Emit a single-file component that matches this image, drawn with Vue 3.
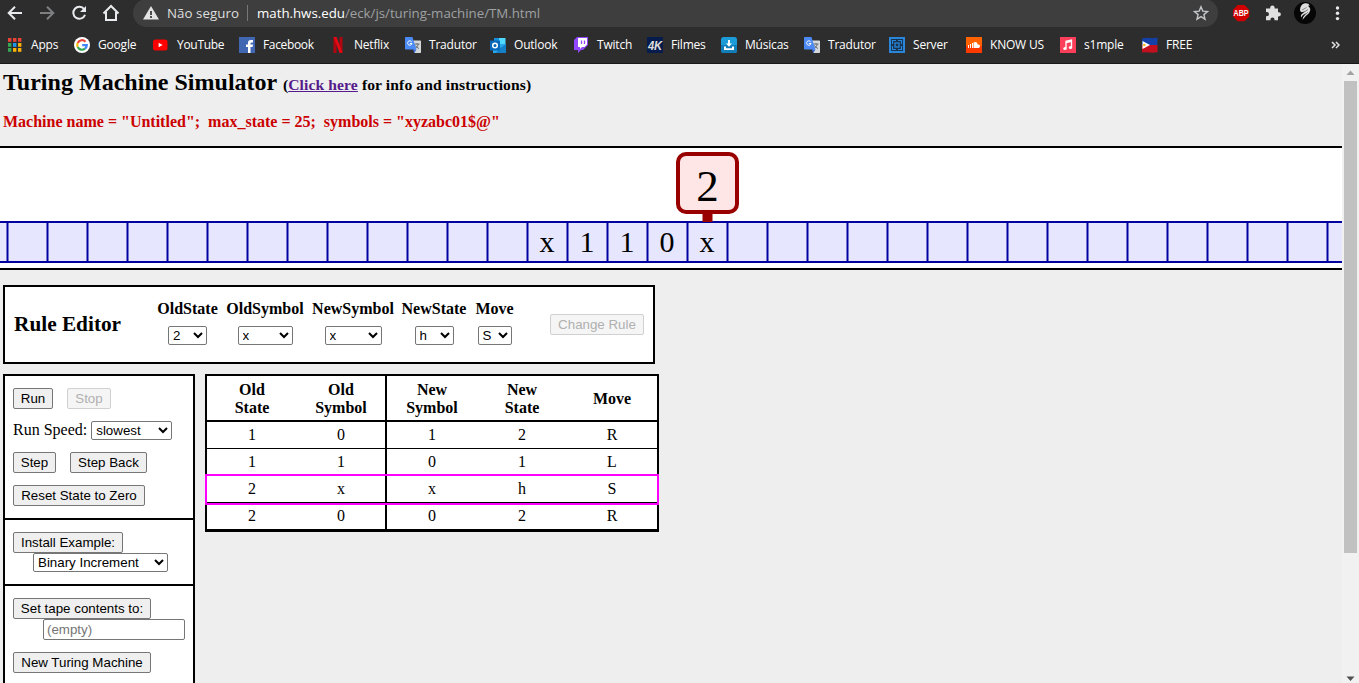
<script setup>
const bookmarks = [
  { id: 'apps', label: 'Apps' },
  { id: 'google', label: 'Google' },
  { id: 'youtube', label: 'YouTube' },
  { id: 'facebook', label: 'Facebook' },
  { id: 'netflix', label: 'Netflix' },
  { id: 'translate', label: 'Tradutor' },
  { id: 'outlook', label: 'Outlook' },
  { id: 'twitch', label: 'Twitch' },
  { id: 'fourk', label: 'Filmes' },
  { id: 'download', label: 'Músicas' },
  { id: 'translate', label: 'Tradutor' },
  { id: 'server', label: 'Server' },
  { id: 'soundcloud', label: 'KNOW US' },
  { id: 'music', label: 's1mple' },
  { id: 'flag', label: 'FREE' },
]
const appDots = ['#ea4335', '#ea4335', '#ea4335', '#34a853', '#2196f3', '#fbb105', '#34a853', '#fbb105', '#fbb105']
const cellLines = Array.from({ length: 34 }, (_, i) => 7.5 + i * 40)
const tape = [
  { x: 547, s: 'x' },
  { x: 587, s: '1' },
  { x: 627, s: '1' },
  { x: 667, s: '0' },
  { x: 707, s: 'x' },
]
const fields = [
  { label: 'OldState', value: '2', cls: 'f1' },
  { label: 'OldSymbol', value: 'x', cls: 'f2' },
  { label: 'NewSymbol', value: 'x', cls: 'f3' },
  { label: 'NewState', value: 'h', cls: 'f4' },
  { label: 'Move', value: 'S', cls: 'f5' },
]
const heads = [['Old', 'State'], ['Old', 'Symbol'], ['New', 'Symbol'], ['New', 'State'], ['Move']]
const rules = [
  ['1', '0', '1', '2', 'R'],
  ['1', '1', '0', '1', 'L'],
  ['2', 'x', 'x', 'h', 'S'],
  ['2', '0', '0', '2', 'R'],
]
</script>

<template>
  <div class="window">
    <header class="chrome">
      <div class="toolbar">
        <svg class="nav" width="133" height="27" viewBox="0 0 133 27" fill="none" stroke-width="2">
          <path d="M22 13H9.500M15 6.700L8.700 13l6.300 6.300" stroke="#e8eaed" />
          <path d="M40 13h12.500M47 6.700L53.300 13 47 19.300" stroke="#7d7f81" />
          <path d="M84.200 9.300A6 6 0 1 0 85 14.700" stroke="#e8eaed" />
          <path d="M86 6v6h-6z" fill="#e8eaed" />
          <path d="M103.500 13.500L111 6l7.500 7.500M106 12v8h10v-8" stroke="#e8eaed" />
        </svg>
        <div class="omnibox">
          <svg class="warn" width="16" height="14" viewBox="0 0 16 14">
            <path d="M8 0l8 13.500H0z" fill="#e3e3e3" />
            <path d="M7.100 5h1.800v4H7.100zM7.100 10h1.800v2H7.100z" fill="#3c3c3c" />
          </svg>
          <span class="secure">Não seguro</span>
          <span class="sep"></span>
          <span class="url"><b>math.hws.edu</b>/eck/js/turing-machine/TM.html</span>
          <svg class="star" width="16" height="16" viewBox="0 0 16 16">
            <path d="M8 1.800l1.800 4.300 4.700.4-3.600 3.100 1.100 4.600L8 11.700l-4 2.500 1.100-4.600L1.500 6.500l4.700-.4z" fill="none" stroke="#c4c6c8" stroke-width="1.400" />
          </svg>
        </div>
        <svg class="tools" width="141" height="27" viewBox="0 0 141 27">
          <path d="M19.700 5h6.800l4.700 4.700v6.800l-4.700 4.700h-6.800L15 16.500V9.700z" fill="#d00000" />
          <text x="23.100" y="16" class="abp" textLength="15" lengthAdjust="spacingAndGlyphs">ABP</text>
          <path d="M49 8.500h3.200V7.600a2.200 2.200 0 0 1 4.400 0v.9H60v3.700h.8a2 2 0 0 1 0 4.200H60v3.900h-3.500v-.8a2 2 0 0 0-4 0v.8H48v-4h.8a2.200 2.200 0 0 0 0-4.400H48V8.500z" fill="#e1e1e1" />
          <circle cx="87" cy="13" r="11" fill="#060606" />
          <path d="M82 10q.2-5.500 5-6.700 4-.3 4.700 2.200l-1.800.3q3.700 2.700 1.700 6.200-1 2-3.600 3.700l-3.500 4q.2-2.500 1.800-4.400l2-2.300-3.300 2-2 2.500q-.5-1.800.6-3.300l3.400-3-3.200 1q-1.600-.4-1.800-2.200z" fill="#dedede" />
          <path d="M84 10l4.500-2.500M84 13.500l6-4M85 17l5-5" stroke="#333" stroke-width=".5" />
          <circle cx="119.500" cy="8" r="1.700" fill="#e8eaed" />
          <circle cx="119.500" cy="13.300" r="1.700" fill="#e8eaed" />
          <circle cx="119.500" cy="18.600" r="1.700" fill="#e8eaed" />
        </svg>
      </div>
      <nav class="bookmarks">
        <div v-for="(b, i) in bookmarks" :key="i" class="bookmark" :class="b.id">
          <svg width="16" height="16" viewBox="0 0 16 16">
            <template v-if="b.id === 'apps'">
              <rect v-for="(c, k) in appDots" :key="k" :x="1 + (k % 3) * 5" :y="1 + Math.floor(k / 3) * 5" width="3.400" height="3.800" :fill="c" />
            </template>
            <template v-else-if="b.id === 'google'">
              <circle cx="8" cy="8" r="8" fill="#fff" />
              <g fill="none" stroke-width="2.200">
                <path d="M11.500 4.700A4.800 4.800 0 0 0 3.700 5.900" stroke="#ea4335" />
                <path d="M3.700 5.900a4.800 4.800 0 0 0 0 4.200" stroke="#fbbc05" />
                <path d="M3.700 10.100a4.800 4.800 0 0 0 7.300 1.600" stroke="#34a853" />
                <path d="M11 11.700A4.800 4.800 0 0 0 12.800 8.100H8.200" stroke="#4285f4" />
              </g>
            </template>
            <template v-else-if="b.id === 'youtube'">
              <rect x="0" y="2.500" width="14.500" height="11" rx="2.500" fill="#f00" />
              <path d="M5.600 5.700v4.600L9.600 8z" fill="#fff" />
            </template>
            <template v-else-if="b.id === 'facebook'">
              <rect width="16" height="16" fill="#4267b2" />
              <path d="M9 16V10H7V7.500h2V5.800Q9 3 11.800 3H14v2.400h-1.300q-1.200 0-1.200 1.100v1H14l-.4 2.500h-2.100v6z" fill="#fff" />
            </template>
            <template v-else-if="b.id === 'netflix'">
              <path d="M3.500 0H6.500V16l-3 .2zM9.500 0h3v16l-3-.3z" fill="#b1060f" />
              <path d="M3.500 0h3l6 16-3-.3z" fill="#e50914" />
            </template>
            <template v-else-if="b.id === 'translate'">
              <path d="M7 3.500h8.300q.7 0 .7.700V15.300q0 .7-.7.700H9.500z" fill="#d6d9dc" />
              <path d="M9.300 7h5.200M12 6v1.500M13.500 7q-.6 3-4 4.700M10.500 8.500q1 2 3.500 3" stroke="#687076" fill="none" />
              <path d="M.7 0H7.400L11.500 12.500H.7Q0 12.500 0 11.800V.7Q0 0 .7 0z" fill="#4c8bf5" />
              <path d="M7.800 12.500h3.700L9.300 16z" fill="#3367d6" />
              <path d="M6.600 4.700A2.200 2.200 0 1 0 7 6.500H4.900" stroke="#fff" fill="none" />
            </template>
            <template v-else-if="b.id === 'outlook'">
              <path d="M4 1h6v6H4z" fill="#1490df" /><path d="M9 1h6.500v6H9z" fill="#50d9ff" />
              <path d="M3 7h13v9H3z" fill="#28a8ea" /><path d="M9 12l7-5v9H6z" fill="#1480c8" />
              <rect y="3.500" width="10" height="10" fill="#0668ba" />
              <circle cx="5" cy="8.500" r="2.300" fill="none" stroke="#fff" stroke-width="1.500" />
            </template>
            <template v-else-if="b.id === 'twitch'">
              <path d="M1 3L4 0h11v8l-5 5H8l-3 3v-3H1z" fill="#9146ff" />
              <path d="M5 1h9v6.500L11.500 10H9l-2 2v-2H5z" fill="#fff" />
              <path d="M8.500 3.500v3.500M11.500 3.500v3.500" stroke="#9146ff" stroke-width="1.300" />
            </template>
            <template v-else-if="b.id === 'fourk'">
              <rect width="16" height="16" fill="#061c4c" />
              <text x="8" y="12.500" class="fk" textLength="14" lengthAdjust="spacingAndGlyphs">4K</text>
            </template>
            <template v-else-if="b.id === 'download'">
              <rect width="16" height="16" rx="2.500" fill="#1b9bd8" />
              <path d="M0 8h16v5.500q0 2.500-2.500 2.500h-11Q0 16 0 13.500z" fill="#117db9" />
              <path d="M7 3h2v3.500h2L8 9.800 5 6.500h2zM3 9.500h2v1.700h6V9.500h2V13H3z" fill="#fff" />
            </template>
            <template v-else-if="b.id === 'server'">
              <rect width="16" height="16" fill="#2a86d8" />
              <rect x="2" y="2" width="12" height="12" fill="#17334f" />
              <path d="M7 3.500H3.500V7M9 3.500h3.500V7M7 12.500H3.500V9M9 12.500h3.500V9" stroke="#2a86d8" stroke-width="1.200" fill="none" />
              <rect x="6" y="6" width="4" height="4" fill="none" stroke="#2a86d8" stroke-width="1.300" />
            </template>
            <template v-else-if="b.id === 'soundcloud'">
              <rect width="16" height="16" fill="#ff6200" />
              <rect y="9" width="16" height="7" fill="#ff3a00" />
              <path d="M7.500 5.500q3.500-1.500 4.200 2 2.300-.3 2.300 1.700T12 11H7.500z" fill="#fff" />
              <path d="M2.500 8v3M4.500 7v4M6.500 6v5" stroke="#fff" />
            </template>
            <template v-else-if="b.id === 'music'">
              <rect width="16" height="16" fill="#fb3f5b" />
              <path d="M6 11.200V4.300l5.500-1.200v7" stroke="#fff" stroke-width="1.300" fill="none" />
              <path d="M6 5.500l5.500-1.200" stroke="#fff" stroke-width="1.500" />
              <ellipse cx="5" cy="11.500" rx="1.700" ry="1.500" fill="#fff" /><ellipse cx="10.500" cy="10.400" rx="1.700" ry="1.500" fill="#fff" />
            </template>
            <template v-else>
              <path d="M0 1.500q4-1 8-.5t7.500-.5V8H0z" fill="#1440a8" />
              <path d="M0 8h15.500v7q-4 1-8 .5t-7.500 0z" fill="#c4101e" />
              <path d="M.5 4L8 8l-7.500 4z" fill="#fff" /><circle cx="2.300" cy="8" r="1.300" fill="#f5b921" />
            </template>
          </svg>
          <span>{{ b.label }}</span>
        </div>
        <svg class="more" width="9" height="8" viewBox="0 0 9 8"><path d="M1 1l3 3-3 3M5 1l3 3-3 3" fill="none" stroke="#e0e0e0" stroke-width="1.500" /></svg>
      </nav>
    </header>

    <div class="viewport">
      <main class="page">
        <h2>Turing Machine Simulator <span class="info">(<a>Click here</a> for info and instructions)</span></h2>
        <p class="machine">Machine name = "Untitled";&nbsp; max_state = 25;&nbsp; symbols = "xyzabc01$@"</p>

        <svg class="tape" width="1342" height="124" viewBox="0 146 1342 124">
          <rect y="146" width="1342" height="124" fill="#000" />
          <rect y="148" width="1342" height="120" fill="#fff" />
          <rect y="222" width="1342" height="40" fill="#e6e6ff" />
          <path v-for="x in cellLines" :key="x" :d="`M${x} 222v40`" stroke="#0000a0" stroke-width="2" />
          <path d="M0 222h1342M0 262h1342" stroke="#0000a0" stroke-width="2" />
          <rect x="702.500" y="212" width="10" height="10" fill="#900" />
          <rect x="678" y="154" width="59" height="58" rx="8" fill="#ffe6e6" stroke="#900" stroke-width="4" />
          <text x="707.500" y="201" class="state">2</text>
          <text v-for="c in tape" :key="c.x" :x="c.x" y="252" class="sym">{{ c.s }}</text>
        </svg>

        <section class="editor">
          <h3>Rule Editor</h3>
          <div v-for="f in fields" :key="f.cls" class="field" :class="f.cls">
            <label>{{ f.label }}</label>
            <select><option>{{ f.value }}</option></select>
          </div>
          <button class="change" disabled>Change Rule</button>
        </section>

        <div class="lower">
          <aside class="controls">
            <div class="group run">
              <div class="line"><button class="w40">Run</button><button class="w44" disabled>Stop</button></div>
              <div class="line speed"><span>Run Speed:</span><select><option>slowest</option></select></div>
              <div class="line"><button class="w43">Step</button><button class="w77">Step Back</button></div>
              <div class="line"><button class="w132">Reset State to Zero</button></div>
            </div>
            <div class="group install">
              <button class="w110">Install Example:</button>
              <select><option>Binary Increment</option></select>
            </div>
            <div class="group set">
              <button class="w138">Set tape contents to:</button>
              <input type="text" placeholder="(empty)" />
              <button class="w138 fresh">New Turing Machine</button>
            </div>
          </aside>

          <div class="rules">
            <div class="row head">
              <div v-for="(h, i) in heads" :key="i" class="cell"><span v-for="w in h" :key="w">{{ w }}</span></div>
            </div>
            <div v-for="(r, i) in rules" :key="i" class="row" :class="{ current: i === 2 }">
              <div v-for="(v, j) in r" :key="j" class="cell">{{ v }}</div>
            </div>
          </div>
        </div>
      </main>
      <div class="scrollbar">
        <svg width="17" height="17"><path d="M4.500 11l4-4.500 4 4.500z" fill="#a3a3a3" /></svg>
        <div class="thumb"></div>
        <svg class="down" width="17" height="13"><path d="M4.500 6.500h8l-4 4.500z" fill="#505050" /></svg>
      </div>
    </div>
  </div>
</template>

<style>
html, body { margin: 0; overflow: hidden; }
</style>

<style scoped>
* { box-sizing: border-box; }
.window { width: 1359px; height: 683px; overflow: hidden; display: flex; flex-direction: column; background: #eee; font-family: "Liberation Serif", "Times New Roman", serif; font-size: 16px; line-height: 18px; color: #000; }
.chrome { height: 64px; flex: none; background: #2d2d2d; border-bottom: 1px solid #191919; font-family: "Open Sans", "Noto Sans", sans-serif; }
.toolbar { display: flex; height: 27px; }
.nav, .tools { flex: none; display: block; }
.omnibox { width: 1085px; height: 28px; margin-top: -1px; background: #3e3e3e; border-radius: 14px; display: flex; align-items: center; font-size: 13.300px; color: #dedede; white-space: nowrap; }
.warn { margin-left: 10px; }
.secure { margin-left: 8px; width: 73px; letter-spacing: 0.050px; }
.sep { width: 1px; height: 16px; background: #777; margin: 0 9px 0 7px; }
.url { color: #9fa1a3; letter-spacing: -0.020px; }
.url b { font-weight: 400; color: #fff; }
.star { margin-left: auto; margin-right: 9px; }
.abp { font: 700 9px "Liberation Sans", sans-serif; fill: #fff; text-anchor: middle; }
.fk { font: italic 700 12px "Liberation Sans", sans-serif; fill: #ddd; text-anchor: middle; }
.bookmarks { height: 36px; padding-left: 7px; display: grid; grid-template-columns: 67px 79px 86px 91px 75px 85px 83px 74px 74px 83px 85px 77px 94px 82px 189px 20px; align-items: center; font-size: 12px; color: #fff; }
.bookmark { display: flex; align-items: center; gap: 8px; white-space: nowrap; letter-spacing: -0.200px; }
.facebook { letter-spacing: -0.350px; }
.youtube { letter-spacing: -0.300px; }
.bookmark svg { flex: none; }
.viewport { flex: 1; display: flex; min-height: 0; }
.page { width: 1342px; overflow: hidden; }
h2 { margin: 4px 0 0 3px; font-size: 24px; line-height: 28px; height: 28px; white-space: nowrap; letter-spacing: 0.020px; }
.info { font-size: 15.600px; letter-spacing: 0.110px; }
a { color: #551a8b; text-decoration: underline; }
.machine { margin: 17px 0 0 3px; height: 33px; font-weight: 700; color: #c00; white-space: nowrap; }
.tape { display: block; }
.state { font: 45px "Liberation Serif", serif; text-anchor: middle; }
.sym { font: 30px "Liberation Serif", serif; text-anchor: middle; }
.editor { margin: 15px 0 0 3px; width: 652px; height: 79px; border: 2px solid #000; background: #fff; display: flex; align-items: center; }
h3 { margin: -2px 0 0 9px; width: 144px; font-size: 21.300px; line-height: 24px; white-space: nowrap; }
.field { display: flex; flex-direction: column; align-items: center; gap: 8px; font-weight: 700; margin-top: -5px; }
.f1 { width: 59px; }
.f2 { width: 96px; }
.f3 { width: 80px; }
.f4 { width: 82px; }
.f5 { width: 39px; }
select { font: 13.333px "Liberation Sans", Arial, sans-serif; height: 19px; margin: 0; padding: 0; border: 1px solid #767676; border-radius: 2px; background: #fff; color: #000; }
.f1 select, .f4 select { width: 39px; }
.f2 select { width: 55px; }
.f3 select { width: 57px; }
.f5 select { width: 34px; }
button { font: 13.333px "Liberation Sans", Arial, sans-serif; height: 21px; margin: 0; padding: 0; border: 1px solid #767676; border-radius: 2px; background: #efefef; color: #000; white-space: nowrap; }
button:disabled { color: #b0b0b0; border-color: #d0d0d0; background: #f5f5f5; }
.change { width: 94px; margin-left: 36px; }
.lower { display: flex; align-items: flex-start; margin: 10px 0 0 3px; gap: 10px; }
.controls { width: 192px; border: 2px solid #000; background: #fff; }
.group { padding-left: 8px; display: flex; flex-direction: column; align-items: flex-start; }
.group + .group { border-top: 2px solid #000; }
.run { height: 142px; padding-top: 12px; }
.line { display: flex; gap: 14px; margin-bottom: 12px; }
.speed { gap: 4px; height: 19px; }
.speed select { width: 81px; }
.install { height: 66px; padding-top: 12px; }
.install select { width: 135px; margin-left: 20px; }
.set { height: 120px; padding-top: 12px; }
input { font: 13.333px "Liberation Sans", Arial, sans-serif; width: 142px; height: 21px; margin: 0 0 0 30px; padding: 1px 3px; border: 1px solid #767676; border-radius: 2px; background: #fff; }
input::placeholder { color: #757575; }
.fresh { margin-top: 12px; }
.w40 { width: 40px; } .w44 { width: 44px; } .w43 { width: 43px; } .w77 { width: 77px; }
.w132 { width: 132px; } .w110 { width: 110px; } .w138 { width: 138px; }
.rules { width: 454px; border: 2px solid #000; border-bottom-width: 3px; background: #fff; }
.row { position: relative; height: 27px; display: grid; grid-template-columns: 90px 90px 90px 90px 90px; border-bottom: 1px solid #000; }
.row:last-child { height: 26px; border-bottom: 0; }
.head { height: 46px; border-bottom-width: 2px; font-weight: 700; }
.cell { display: flex; flex-direction: column; align-items: center; justify-content: center; }
.head .cell { padding-top: 1px; }
.cell:nth-child(2) { border-right: 2px solid #000; }
.current::after { content: ""; position: absolute; z-index: 1; top: -2px; bottom: -3px; left: -2px; right: -2px; border: 2px solid #f0f; }
.scrollbar { width: 17px; background: #f1f1f1; display: flex; flex-direction: column; align-items: center; }
.scrollbar svg { display: block; flex: none; }
.thumb { width: 13px; height: 472px; background: #c1c1c1; }
.down { margin-top: auto; }
</style>
